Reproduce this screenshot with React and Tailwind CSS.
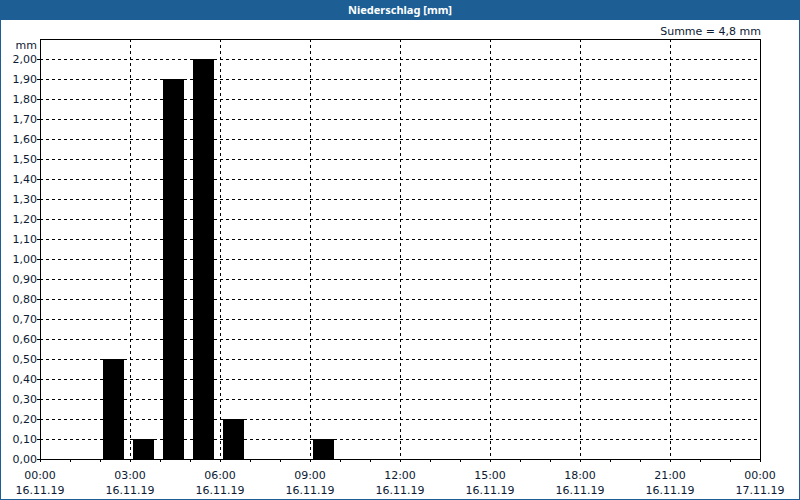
import React from "react"

const bars = [
  [2, 0.5], [3, 0.1], [4, 1.9], [5, 2.0], [6, 0.2], [9, 0.1],
]
const yVals = Array.from({ length: 21 }, (_, i) => i / 10)
const xLabels = [
  ["00:00", "16.11.19"], ["03:00", "16.11.19"], ["06:00", "16.11.19"],
  ["09:00", "16.11.19"], ["12:00", "16.11.19"], ["15:00", "16.11.19"],
  ["18:00", "16.11.19"], ["21:00", "16.11.19"], ["00:00", "17.11.19"],
]
const y = (v) => 460 - 200 * v

export default function App() {
  return (
    <div className="w-[800px] h-[500px] bg-white flex flex-col border-x border-b border-[#1d5f95] font-['DejaVu_Sans',sans-serif] text-[#0c1a33]">
      <div className="h-[20px] bg-[#1d5f95] text-white text-[11px] font-bold flex items-center justify-center">
        Niederschlag [mm]
      </div>
      <div className="relative flex-1">
        <svg width="798" height="479" viewBox="1 21 798 479" className="absolute left-0 top-0">
          <g fontSize="11" fill="#0c1a33" fontFamily="DejaVu Sans, sans-serif">
            <text x="761" y="36" textAnchor="end">Summe = 4,8 mm</text>
            <text x="37" y="50" textAnchor="end">mm</text>
            {yVals.map((v) => (
              <text key={v} x="37" y={y(v) + 4} textAnchor="end">{v.toFixed(2).replace(".", ",")}</text>
            ))}
            {xLabels.map(([t, d], i) => (
              <g key={i}>
                <text x={40 + 90 * i} y={480} textAnchor="middle">{t}</text>
                <text x={40 + 90 * i} y={495} textAnchor="middle">{d}</text>
              </g>
            ))}
          </g>
          <g stroke="#000" strokeWidth="1" strokeDasharray="3 3" shapeRendering="crispEdges">
            {yVals.slice(1).map((v) => (
              <line key={v} x1="40" x2="760" y1={y(v) + 0.5} y2={y(v) + 0.5} />
            ))}
            {[1, 2, 3, 4, 5, 6, 7].map((i) => (
              <line key={i} x1={130 + 90 * (i - 1) + 0.5} x2={130 + 90 * (i - 1) + 0.5} y1="40" y2="460" />
            ))}
          </g>
          <g fill="#000">
            {bars.map(([h, v]) => (
              <rect key={h} x={40 + 30 * h + 3} y={y(v)} width="21" height={200 * v} />
            ))}
          </g>
          <g stroke="#000" strokeWidth="1" shapeRendering="crispEdges" fill="none">
            <rect x="40.5" y="40.5" width="720" height="420" />
            {yVals.map((v) => (
              <line key={v} x1="37" x2="40" y1={y(v) + 0.5} y2={y(v) + 0.5} />
            ))}
            {Array.from({ length: 25 }, (_, i) => (
              <line key={i} x1={40 + 30 * i + 0.5} x2={40 + 30 * i + 0.5} y1="460" y2="463" />
            ))}
          </g>
        </svg>
      </div>
    </div>
  )
}
